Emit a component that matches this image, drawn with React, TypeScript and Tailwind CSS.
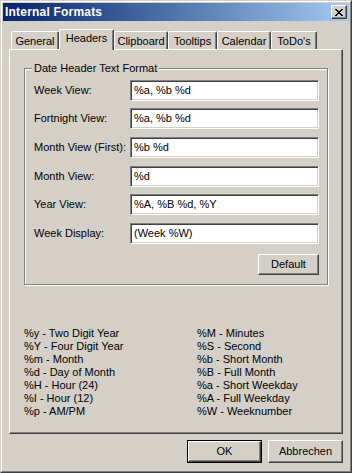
import React from "react";

const tabs = ["General", "Headers", "Clipboard", "Tooltips", "Calendar", "ToDo's"];
const tabWidths = ["w-[48px]", "w-[55px]", "w-[54px]", "w-[49px]", "w-[54px]", "w-[46px]"];

const rows = [
  { label: "Week View:", value: "%a, %b %d", mt: "" },
  { label: "Fortnight View:", value: "%a, %b %d", mt: "mt-[7px]" },
  { label: "Month View (First):", value: "%b %d", mt: "mt-[8px]" },
  { label: "Month View:", value: "%d", mt: "mt-[8px]" },
  { label: "Year View:", value: "%A, %B %d, %Y", mt: "mt-[7px]" },
  { label: "Week Display:", value: "(Week %W)", mt: "mt-[8px]" },
];

const leftCodes = [
  "%y - Two Digit Year",
  "%Y - Four Digit Year",
  "%m - Month",
  "%d - Day of Month",
  "%H - Hour (24)",
  "%I - Hour (12)",
  "%p - AM/PM",
];

const rightCodes = [
  "%M - Minutes",
  "%S - Second",
  "%b - Short Month",
  "%B - Full Month",
  "%a - Short Weekday",
  "%A - Full Weekday",
  "%W - Weeknumber",
];

// raised 3d button look (win2000)
const raised =
  "bg-[#d4d0c8] border border-t-white border-l-white border-r-[#404040] border-b-[#404040] shadow-[inset_-1px_-1px_#808080]";

export default function App() {
  return (
    <div className="w-[352px] h-[473px] bg-[#d4d0c8] text-black text-[11px] leading-[13px] [font-family:'Liberation_Sans',Arial,sans-serif] border border-t-[#d4d0c8] border-l-[#d4d0c8] border-r-[#404040] border-b-[#404040]">
      <div className="h-full border border-t-white border-l-white border-r-[#808080] border-b-[#808080] p-[1px] flex flex-col">
        {/* Title bar */}
        <div className="h-[18px] flex items-center justify-between bg-gradient-to-r from-[#0a246a] to-[#a6caf0] pl-[2px] pr-[2px]">
          <span className="text-white font-bold text-[12px] tracking-[0.2px]">Internal Formats</span>
          <button className={`w-[16px] h-[14px] flex items-center justify-center ${raised}`}>
            <svg width="8" height="7" viewBox="0 0 8 7" shapeRendering="crispEdges">
              <path d="M0 0h2v1h-2zM6 0h2v1h-2zM1 1h2v1h-2zM5 1h2v1h-2zM2 2h4v1h-4zM3 3h2v1h-2zM2 4h4v1h-4zM1 5h2v1h-2zM5 5h2v1h-2zM0 6h2v1h-2zM6 6h2v1h-2z" fill="#000" />
            </svg>
          </button>
        </div>

        {/* Body */}
        <div className="flex-1 flex flex-col pl-[6px] pr-[6px] pt-[8px]">
          {/* Tabs */}
          <div className="h-[20px] flex items-end pl-[2px]">
            {tabs.map((t, i) =>
              i === 1 ? (
                <div
                  key={t}
                  className={`${tabWidths[i]} h-[21px] -mb-[1px] relative z-10 flex items-center justify-center pb-[3px] bg-[#d4d0c8] border-t border-l border-r border-t-white border-l-white border-r-[#404040] shadow-[inset_-1px_0_#808080] rounded-t-[2px]`}
                >
                  {t}
                </div>
              ) : (
                <div
                  key={t}
                  className={`${tabWidths[i]} h-[18px] flex items-center justify-center pt-[1px] border-t border-l border-r border-t-white border-l-white border-r-[#404040] shadow-[inset_-1px_0_#808080] rounded-t-[2px]`}
                >
                  {t}
                </div>
              )
            )}
          </div>

          {/* Tab panel */}
          <div className="h-[385px] border border-t-white border-l-white border-r-[#404040] border-b-[#404040] shadow-[inset_-1px_-1px_#808080]">
            {/* Group box */}
            <div className="relative ml-[14px] mt-[18px] w-[304px] h-[217px] border border-[#808080] shadow-[inset_1px_1px_#fff,1px_1px_#fff]">
              <span className="absolute -top-[7px] left-[7px] px-[2px] bg-[#d4d0c8]">
                Date Header Text Format
              </span>
              <div className="pt-[11px] pl-[9px] flex flex-col">
                {rows.map((r) => (
                  <div key={r.label} className={`flex items-center h-[21px] ${r.mt}`}>
                    <span className="w-[96px]">{r.label}</span>
                    <div className="w-[189px] h-[21px] bg-white border border-t-[#808080] border-l-[#808080] border-r-white border-b-white shadow-[inset_1px_1px_#404040,inset_-1px_-1px_#d4d0c8] flex items-center pl-[3px]">
                      {r.value}
                    </div>
                  </div>
                ))}
                <div className="flex justify-end pr-[8px] mt-[10px]">
                  <button className={`w-[61px] h-[21px] flex items-center justify-center ${raised}`}>
                    Default
                  </button>
                </div>
              </div>
            </div>

            {/* Format codes */}
            <div className="ml-[14px] mt-[42px] grid grid-cols-[173px_1fr]">
              <div className="flex flex-col">
                {leftCodes.map((c) => (
                  <span key={c}>{c}</span>
                ))}
              </div>
              <div className="flex flex-col">
                {rightCodes.map((c) => (
                  <span key={c}>{c}</span>
                ))}
              </div>
            </div>
          </div>

          {/* Dialog buttons */}
          <div className="flex justify-end gap-[6px] mt-[6px]">
            <div className="w-[75px] h-[23px] border border-black">
              <button className={`w-full h-full flex items-center justify-center ${raised}`}>OK</button>
            </div>
            <button className={`w-[75px] h-[23px] flex items-center justify-center ${raised}`}>
              Abbrechen
            </button>
          </div>
        </div>
      </div>
    </div>
  );
}
